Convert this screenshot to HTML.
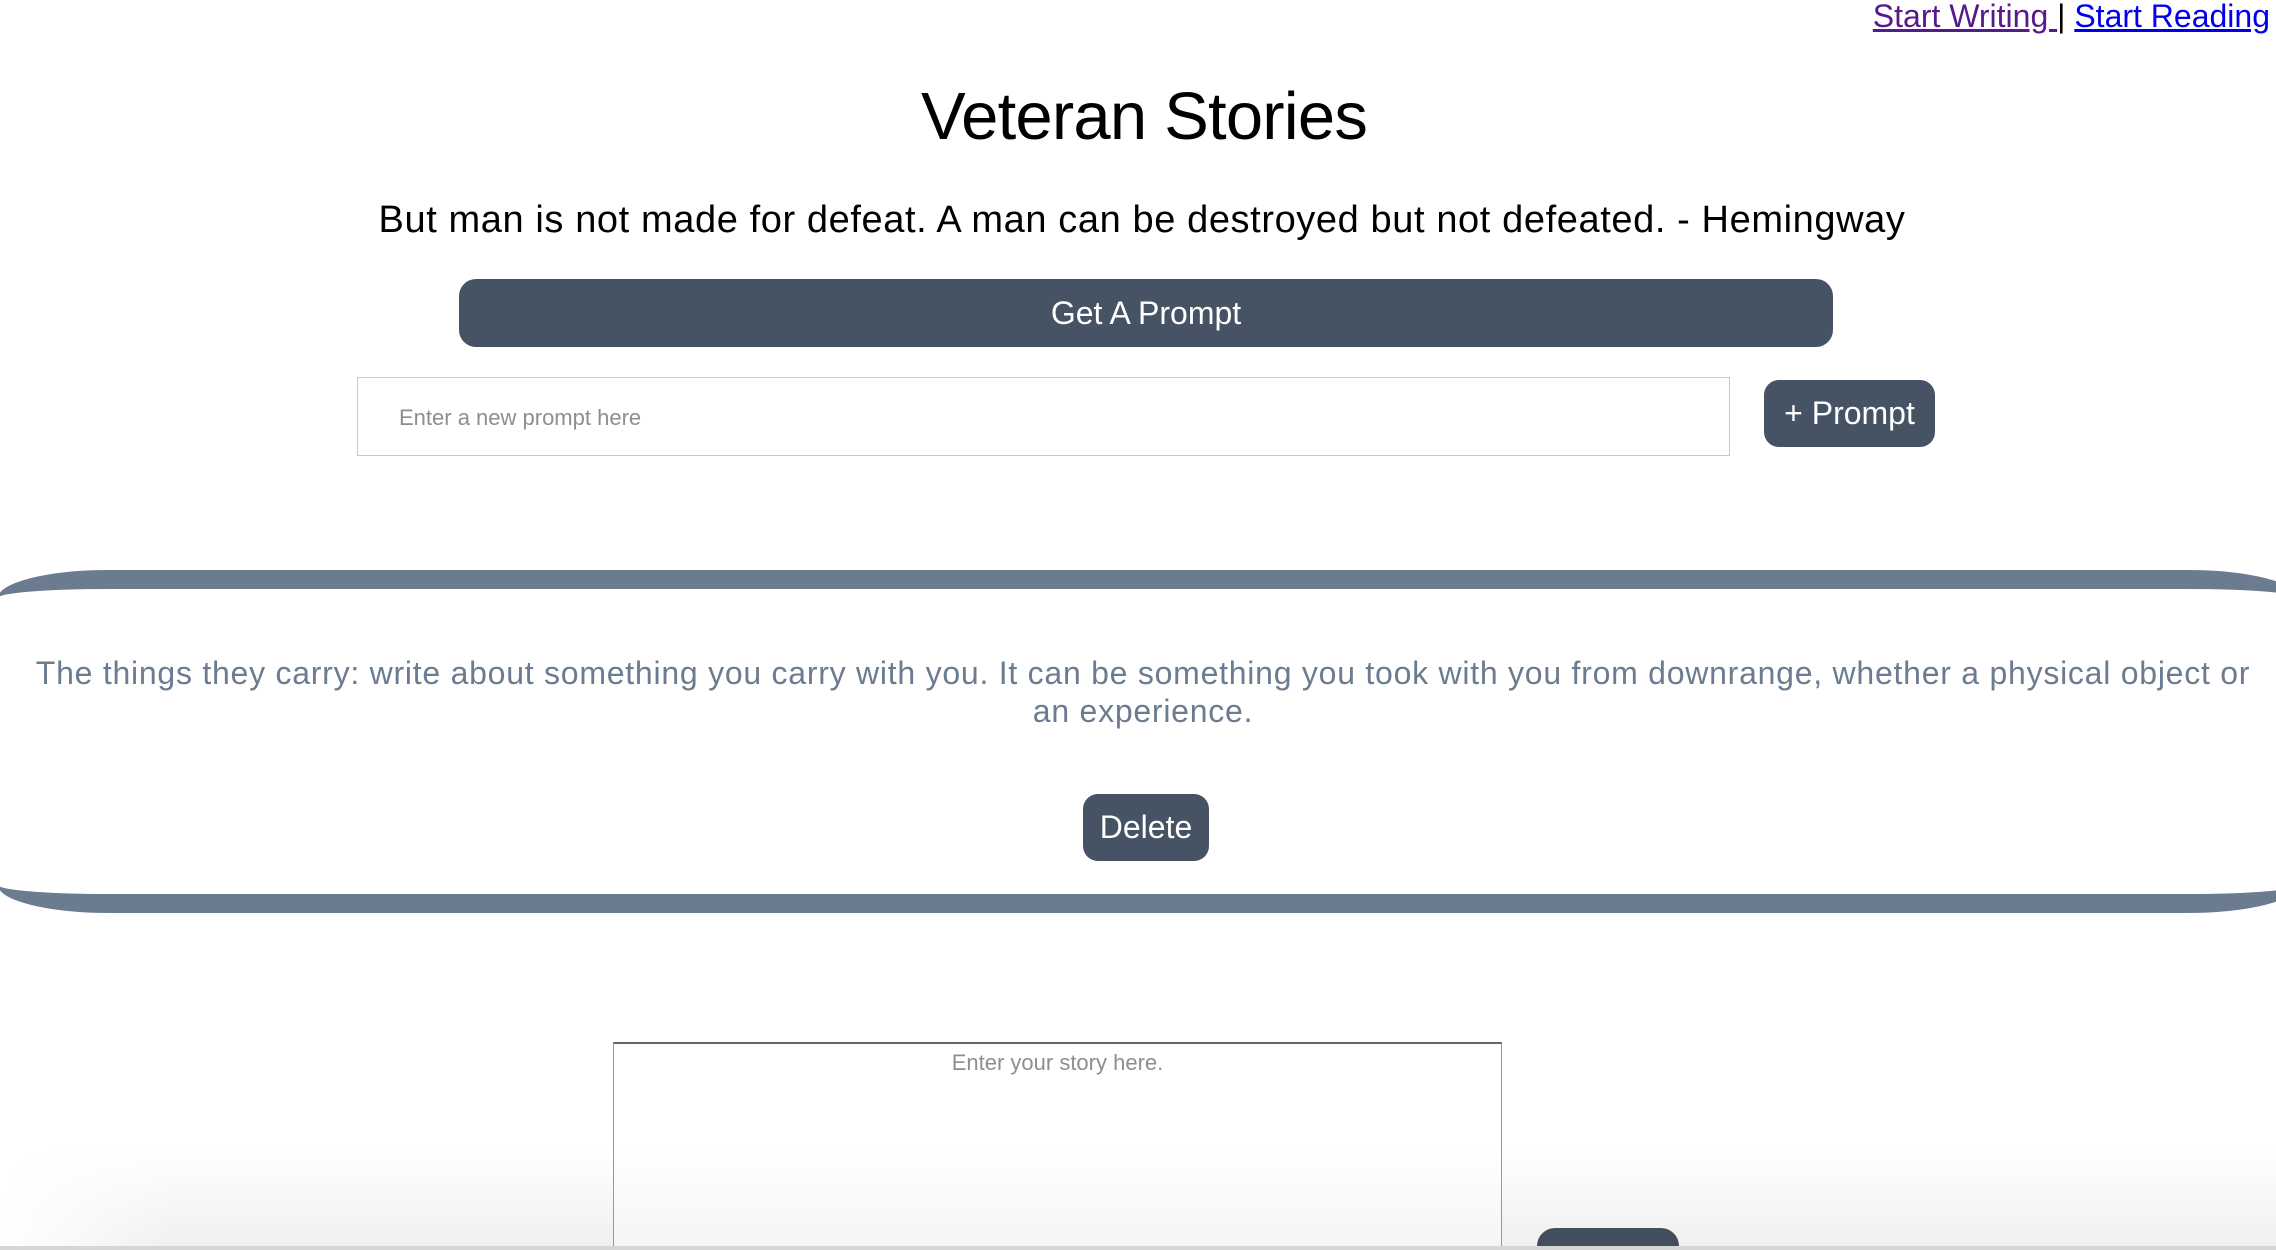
<!DOCTYPE html>
<html><head><meta charset="utf-8">
<style>
html,body{margin:0;padding:0;width:2276px;height:1250px;overflow:hidden;background:#fff;font-family:"Liberation Sans",sans-serif;position:relative}
.abs{position:absolute}
.links{right:6px;top:-2px;font-size:32px;white-space:nowrap;color:#000}
.links a{text-decoration:underline}
.w{color:#551a8b}.r{color:#0000ee}
.title{left:0;width:2276px;text-align:center;top:77px;font-size:67px;line-height:80px;color:#000;letter-spacing:-0.8px;padding-left:12px;box-sizing:border-box}
.quote{left:0;width:2276px;text-align:center;top:197px;font-size:38px;line-height:46px;color:#000;white-space:nowrap;letter-spacing:0.6px;padding-left:8px;box-sizing:border-box}
.btn{background:#465364;color:#fff;text-align:center;font-size:32px}
.getp{left:459px;top:279px;width:1374px;height:68px;line-height:68px;border-radius:17px}
.inp{left:357px;top:377px;width:1371px;height:77px;border:1px solid #c8c8c8;box-sizing:content-box}
.inp span{position:absolute;left:41px;top:27px;font-size:22px;color:#8e8e8e}
.addp{left:1764px;top:380px;width:171px;height:67px;line-height:67px;border-radius:15px}
.band{left:-2px;top:570px;width:2300px;height:305px;border-top:19px solid #6b7c91;border-bottom:19px solid #6b7c91;border-radius:110px/28px}
.ptxt{left:0;width:2276px;text-align:center;top:654px;font-size:32px;line-height:38px;color:#6b7c91;white-space:nowrap;letter-spacing:0.75px;padding-left:10px;box-sizing:border-box}
.del{left:1083px;top:794px;width:126px;height:67px;line-height:67px;border-radius:15px}
.shade{left:0;top:1150px;width:2276px;height:100px;background:linear-gradient(#fff,#efefef)}
.shadel{left:0;top:1150px;width:180px;height:100px;background:linear-gradient(90deg,#fff,rgba(255,255,255,0))}
.ta{left:613px;top:1042px;width:887px;height:230px;border:1px solid #999;border-top:2px solid #666;background:linear-gradient(#fff 0,#fff 45%,#f2f2f2 100%)}
.ta span{position:absolute;left:0;width:100%;text-align:center;top:6px;font-size:22px;color:#8e8e8e}
.sub{left:1537px;top:1228px;width:142px;height:40px;border-radius:18px 18px 0 0;background:#434f5f}
.bl{left:0;top:1246px;width:2276px;height:4px;background:#d6d6d6}
</style></head><body>
<div class="abs links"><a class="w">Start Writing </a>| <a class="r">Start Reading</a></div>
<div class="abs title">Veteran Stories</div>
<div class="abs quote">But man is not made for defeat. A man can be destroyed but not defeated. - Hemingway</div>
<div class="abs btn getp">Get A Prompt</div>
<div class="abs inp"><span>Enter a new prompt here</span></div>
<div class="abs btn addp">+ Prompt</div>
<div class="abs band"></div>
<div class="abs ptxt">The things they carry: write about something you carry with you. It can be something you took with you from downrange, whether a physical object or<br>an experience.</div>
<div class="abs btn del">Delete</div>
<div class="abs shade"></div>
<div class="abs shadel"></div>
<div class="abs ta"><span>Enter your story here.</span></div>
<div class="abs sub"></div>
<div class="abs bl"></div>
</body></html>
